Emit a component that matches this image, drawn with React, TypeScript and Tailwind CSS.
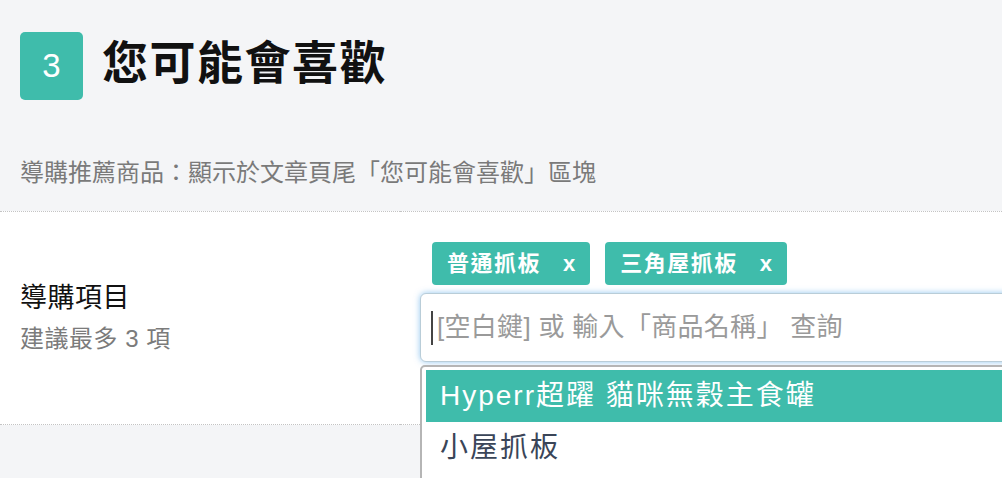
import React from 'react';

const FONT = '[font-family:"Liberation_Sans","Noto_Sans_CJK_TC",sans-serif]';

const TAGS = ['普通抓板', '三角屋抓板'];

const OPTIONS = [
  { label: 'Hyperr超躍 貓咪無穀主食罐', active: true },
  { label: '小屋抓板', active: false },
];

function Tag({ text }: { text: string }) {
  return (
    <span className="flex h-[43px] items-center rounded-[4px] bg-[#3fbcab] px-[15px] text-[22px] font-bold tracking-[1.5px] text-white">
      {text}
      <span className="ml-[22px] tracking-normal">x</span>
    </span>
  );
}

export default function App() {
  return (
    <div className={`h-[478px] w-full overflow-hidden bg-[#f4f5f7] ${FONT}`}>
      {/* section header */}
      <div className="flex items-center gap-[19px] pl-5 pt-8">
        <div className="flex h-[68px] w-[63px] items-center justify-center rounded-[5px] bg-[#3fbcab] text-[33px] text-white">
          3
        </div>
        <h1 className="-mt-[6px] text-[46px] font-bold leading-none tracking-[1.5px] text-[#111]">
          您可能會喜歡
        </h1>
      </div>
      <p className="mt-[57px] pb-[22px] pl-5 text-[24px] leading-[32px] text-[#7a7a7a]">
        導購推薦商品：顯示於文章頁尾「您可能會喜歡」區塊
      </p>

      {/* field row */}
      <div className="flex">
        <div className="flex w-[400px] shrink-0 flex-col justify-center border-y border-dotted border-[#c4c4c4] bg-white pl-5">
          <p className="text-[27px] leading-[36px] tracking-[0.5px] text-[#111]">導購項目</p>
          <p className="mt-[6px] text-[24px] leading-[34px] tracking-[0.5px] text-[#7b7b7b]">建議最多 3 項</p>
        </div>
        <div className="w-[660px] shrink-0 border-y border-dotted border-[#c4c4c4] bg-white pb-[62px] pl-5 pt-[30px]">
          <div className="ml-3 flex gap-[15px]">
            {TAGS.map((t) => (
              <Tag key={t} text={t} />
            ))}
          </div>
          <div className="relative mt-2">
            <div className="flex h-[69px] items-center rounded-[6px] border border-[#b9cdd8] bg-white pl-[10px] shadow-[0_0_6px_rgba(102,175,233,0.7)]">
              <span className="h-[34px] w-[2px] bg-[#444]" />
              <span className="ml-[4px] text-[26px] tracking-[0.3px] text-[#9a9a9a]">
                [空白鍵] 或 輸入「商品名稱」 查詢
              </span>
            </div>
            {/* autocomplete list */}
            <ul className="absolute left-0 right-0 top-[72px] z-10 rounded-tl-[5px] border-2 border-[#b5b5b5] bg-white px-[4px] pb-[30px] pt-[3px]">
              {OPTIONS.map((o) => (
                <li
                  key={o.label}
                  className={`flex h-[52px] items-center pl-[14px] text-[28px] tracking-[2px] ${
                    o.active ? 'bg-[#3fbcab] text-white' : 'text-[#3a4558]'
                  }`}
                >
                  {o.label}
                </li>
              ))}
            </ul>
          </div>
        </div>
      </div>
    </div>
  );
}
